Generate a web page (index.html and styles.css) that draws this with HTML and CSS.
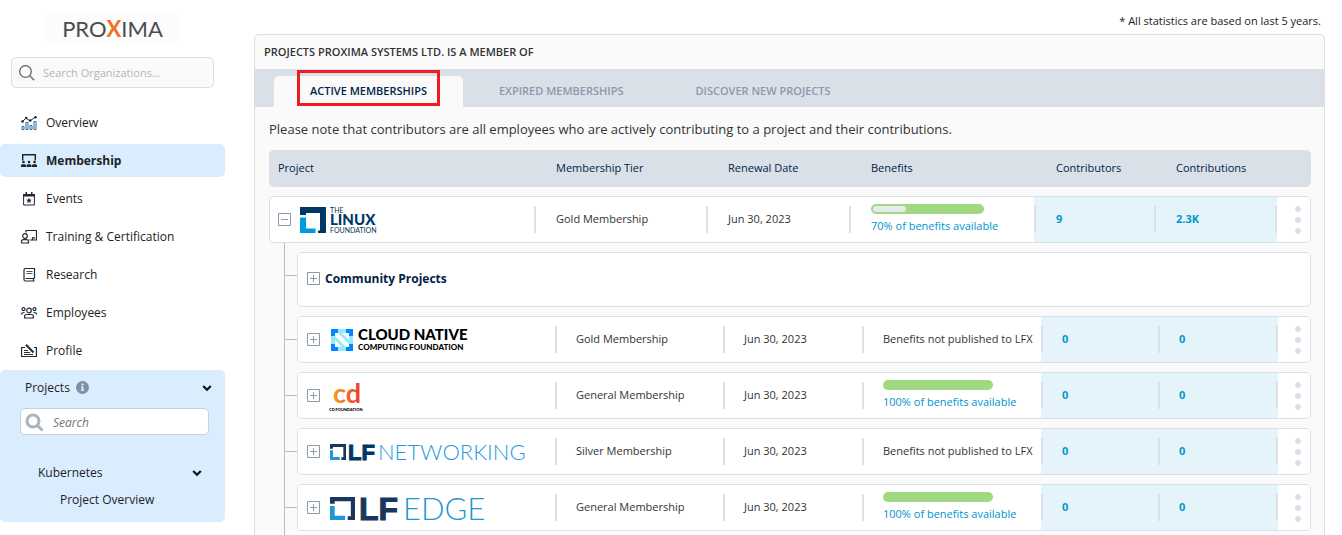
FILE: index.html
```html
<!DOCTYPE html>
<html lang="en">
<head>
<meta charset="utf-8">
<title>Membership</title>
<link rel="stylesheet" href="styles.css">
</head>
<body>
<svg class="defs" aria-hidden="true">
  <symbol id="lf-mark" viewBox="0 0 26 26"><path fill="#003764" d="M0 0H26V26H18V23.500H20V6H6V8H0Z"/><path fill="#009ade" d="M0 10.500H6V21.500H15.500V26H0Z"/></symbol>
  <symbol id="lf-thin" viewBox="0 0 24 24" preserveAspectRatio="none"><path fill="#1b365d" d="M0 0H24V24H17V20H20V4.500H4.500V7H0Z"/><path fill="#1f97d4" d="M0 9.500H4.500V19.500H14.500V24H0Z"/></symbol>
  <symbol id="chevron" viewBox="0 0 10 8"><path d="M1.200 2 5 5.800 8.800 2" fill="none" stroke="#111" stroke-width="2.200"/></symbol>
  <symbol id="plus" viewBox="0 0 13 13"><path d="M.5.5h12v12H.5zM3 6.500h7M6.500 3v7" fill="none" stroke="#8b9bab"/></symbol>
</svg>
<div class="app">
  <aside class="sidebar">
    <div class="brand" aria-label="Proxima">PRO<span>X</span>IMA</div>
    <label class="org-search">
      <svg width="16" height="16" viewBox="0 0 16 16" fill="none" stroke="#666" stroke-width="1.300"><circle cx="6.500" cy="6.500" r="5.800"/><path d="m10.700 10.700 4.500 4.500"/></svg>
      <input type="text" placeholder="Search Organizations..." aria-label="Search organizations">
    </label>
    <nav class="nav">
      <a href="#"><svg width="16" height="14" viewBox="0 0 16 14" fill="none" stroke="#1d2b36"><path d="M1 6 5 2l4 3 6-4.500"/><path stroke="#2b6ea0" d="M1 13.500v-3h2v3zM5 13.500v-7h2v7zM9 13.500v-4h2v4zM13 13.500v-8h2v8z"/><g fill="#1d2b36" stroke="none"><circle cx="1.500" cy="5.500" r="1.300"/><circle cx="5.200" cy="2" r="1.300"/><circle cx="9.200" cy="4.500" r="1.300"/><circle cx="14.500" cy="1.300" r="1.300"/></g></svg>Overview</a>
      <a href="#" class="active" aria-current="page"><svg width="16" height="14" viewBox="0 0 16 14" fill="#1b242c"><path d="M1 0h14v6.500h-1.400V1.500H2.400v5H1z"/><circle cx="2.500" cy="8" r="1.300"/><circle cx="8" cy="8" r="1.300"/><circle cx="13.500" cy="8" r="1.300"/><path d="M0 13v-1.800l1-1h3l1 1V13zM5.500 13v-1.800l1-1h3l1 1V13zM11 13v-1.800l1-1h3l1 1V13z"/></svg>Membership</a>
      <a href="#"><svg width="16" height="14" viewBox="0 0 16 14"><path d="M2.600 2.500h10.800v10.500H2.600z" fill="none" stroke="#222b33"/><path d="M2 2h12v2.500H2zM4.500 0H6v2H4.500zM10 0h1.500v2H10z" fill="#222b33"/><path d="m8 5.800.8 1.700 1.900.2-1.400 1.300.4 1.900L8 10l-1.700.9.4-1.900-1.400-1.300 1.900-.2z" fill="#222b33"/></svg>Events</a>
      <a href="#"><svg width="16" height="14" viewBox="0 0 16 14" fill="none" stroke="#222b33" stroke-width="1.200"><path d="M5 2.500v-2h10.500v9.500H8.500M11.500 10V7.800h2.500"/><circle cx="4" cy="6" r="2.300"/><path d="M.5 13v-1.500c0-1 .8-1.800 1.800-1.800h3.400c1 0 1.800.8 1.800 1.800V13z"/></svg>Training &amp; Certification</a>
      <a href="#"><svg width="16" height="14" viewBox="0 0 16 14" fill="none" stroke="#222b33" stroke-width="1.200"><path d="M13.500 10.500V.5h-9c-1 0-1.500.5-1.500 1.500v9.500c0 1 .5 1.500 1.500 1.500h9M13.500 10.500h-9M12.500 10.500V13"/><path d="M5.500 3.500h6M5.500 5.500h6" stroke="#555"/></svg>Research</a>
      <a href="#"><svg width="16" height="14" viewBox="0 0 16 14" fill="none" stroke="#222b33" stroke-width="1.200"><circle cx="8" cy="4.500" r="2.300"/><circle cx="2.500" cy="3.200" r="1.500"/><circle cx="13.500" cy="3.200" r="1.500"/><path d="M3.600 12v-1.600c0-1.200.9-1.900 2-1.900h4.800c1.100 0 2 .7 2 1.900V12zM.5 8.500C.5 7 1.300 6.500 3.500 6.500M15.500 8.500c0-1.500-.8-2-3-2"/></svg>Employees</a>
      <a href="#"><svg width="16" height="14" viewBox="0 0 16 14" fill="none" stroke="#222b33" stroke-width="1.200"><path d="M4 3.500H.6v9h14.800v-9H13M3 6.500h4M3 8.500h6M3 10.500h9"/><path stroke-width="2" d="m5 .8 7.500 7.700"/></svg>Profile</a>
    </nav>
    <section class="projects">
      <button class="proj-head" type="button"><span>Projects</span><svg width="13" height="13" viewBox="0 0 13 13"><circle cx="6.500" cy="6.500" r="6.500" fill="#808fa3"/><path d="M5.500 2.500h2v2h-2zM5 5.500h2.500v3.500h.5v1H5V9h.5V6.500H5z" fill="#d9edff"/></svg><svg class="end" width="10" height="8"><use href="#chevron"/></svg></button>
      <label class="proj-search">
        <svg width="19" height="19" viewBox="0 0 19 19" fill="none" stroke="#a9b4bf" stroke-width="3"><circle cx="8" cy="8" r="6"/><path d="m12.500 12.500 5 5"/></svg>
        <input type="text" placeholder="Search" aria-label="Search projects">
      </label>
      <button class="kube" type="button"><span>Kubernetes</span><svg class="end" width="10" height="8"><use href="#chevron"/></svg></button>
      <a class="sub" href="#">Project Overview</a>
    </section>
  </aside>

  <main class="main">
    <p class="note">* All statistics are based on last 5 years.</p>
    <section class="panel">
      <h1>PROJECTS PROXIMA SYSTEMS LTD. IS A MEMBER OF</h1>
      <div class="tabs" role="tablist">
        <button role="tab" class="tab current" aria-selected="true" type="button">ACTIVE MEMBERSHIPS</button>
        <button role="tab" class="tab" type="button">EXPIRED MEMBERSHIPS</button>
        <button role="tab" class="tab" type="button">DISCOVER NEW PROJECTS</button>
      </div>
      <div class="content">
        <p class="intro">Please note that contributors are all employees who are actively contributing to a project and their contributions.</p>
        <table class="grid parent">
          <colgroup><col><col class="c-tier"><col class="c-date"><col class="c-ben"><col class="c-num"><col class="c-sum"><col class="c-menu"></colgroup>
          <thead><tr><th>Project</th><th>Membership Tier</th><th>Renewal Date</th><th>Benefits</th><th>Contributors</th><th>Contributions</th><th></th></tr></thead>
          <tbody><tr>
            <td><div class="project"><button class="toggle" type="button" aria-label="Collapse"><svg width="13" height="13" viewBox="0 0 13 13"><path d="M.5.5h12v12H.5zM3 6.500h7" fill="none" stroke="#8b9bab"/></svg></button>
              <svg class="logo" width="82" height="28" viewBox="0 0 82 28"><use href="#lf-mark" width="26" height="26" y="1"/><g fill="#003764"><text class="lg-sans" x="30" y="7" font-size="7">THE</text><text class="lg-heavy" x="30" y="19" font-size="15">LINUX</text><text class="lg-sans" x="30" y="27" font-size="7">FOUNDATION</text></g></svg></div></td>
            <td>Gold Membership</td><td>Jun 30, 2023</td>
            <td><div class="meter"><span style="width:30%"></span></div><a href="#">70% of benefits available</a></td>
            <td class="num">9</td><td class="num last">2.3K</td>
            <td class="menu"><button type="button" aria-label="More"><i></i><i></i><i></i></button></td>
          </tr></tbody>
        </table>
        <div class="tree">
          <table class="grid child">
            <colgroup><col><col class="c-tier"><col class="c-date"><col class="c-ben"><col class="c-num"><col class="c-sum"><col class="c-menu"></colgroup>
            <tbody>
            <tr class="community"><td colspan="7"><div class="project"><button class="toggle" type="button" aria-label="Expand"><svg width="13" height="13"><use href="#plus"/></svg></button><strong>Community Projects</strong></div></td></tr>
            <tr>
              <td><div class="project"><button class="toggle" type="button" aria-label="Expand"><svg width="13" height="13"><use href="#plus"/></svg></button>
                <svg class="logo" width="142" height="28" viewBox="0 0 142 28"><g transform="translate(2 3)"><path fill="#93eaff" d="M0 0h22v22H0z"/><path fill="#0086ff" d="M0 0h7v4H4v3H0zM15 0h7v7h-4V4h-3zM22 15v7h-7v-4h3v-3zM7 22H0v-7h4v3h3z"/><path fill="#fff" d="M4 4h14v14H4z"/><path fill="#93eaff" d="M4 7 15 18h-4L4 11zM7 4l11 11v-4l-7-7z"/></g><text class="lg-heavy" x="29" y="14" font-size="15">CLOUD NATIVE</text><text class="lg-heavy" x="29" y="24" font-size="8">COMPUTING FOUNDATION</text></svg></div></td>
              <td>Gold Membership</td><td>Jun 30, 2023</td><td>Benefits not published to LFX</td>
              <td class="num">0</td><td class="num last">0</td>
              <td class="menu"><button type="button" aria-label="More"><i></i><i></i><i></i></button></td>
            </tr>
            <tr>
              <td><div class="project"><button class="toggle" type="button" aria-label="Expand"><svg width="13" height="13"><use href="#plus"/></svg></button>
                <svg class="logo" width="40" height="32" viewBox="0 0 40 32"><defs><linearGradient id="cd" gradientUnits="userSpaceOnUse" x1="4" y1="0" x2="32" y2="0"><stop stop-color="#f79a1f"/><stop offset="1" stop-color="#ec3a2d"/></linearGradient></defs><text class="lg-bold" x="4" y="23" font-size="27" fill="url(#cd)">cd</text><text class="lg-heavy" x="0" y="31" font-size="4">CD.FOUNDATION</text></svg></div></td>
              <td>General Membership</td><td>Jun 30, 2023</td>
              <td><div class="meter"></div><a href="#">100% of benefits available</a></td>
              <td class="num">0</td><td class="num last">0</td>
              <td class="menu"><button type="button" aria-label="More"><i></i><i></i><i></i></button></td>
            </tr>
            <tr>
              <td><div class="project"><button class="toggle" type="button" aria-label="Expand"><svg width="13" height="13"><use href="#plus"/></svg></button>
                <svg class="logo" width="200" height="24" viewBox="0 0 200 24"><use href="#lf-thin" width="16" height="16" x="1" y="4"/><text class="lg-wide" x="19" y="20" font-size="22" fill="#003764" stroke="#003764">LF</text><text class="lg-light" x="49" y="20" font-size="22" fill="#1f9bdb">NETWORKING</text></svg></div></td>
              <td>Silver Membership</td><td>Jun 30, 2023</td><td>Benefits not published to LFX</td>
              <td class="num">0</td><td class="num last">0</td>
              <td class="menu"><button type="button" aria-label="More"><i></i><i></i><i></i></button></td>
            </tr>
            <tr>
              <td><div class="project"><button class="toggle" type="button" aria-label="Expand"><svg width="13" height="13"><use href="#plus"/></svg></button>
                <svg class="logo" width="160" height="30" viewBox="0 0 160 30"><use href="#lf-thin" width="25" height="23" x="1" y="4"/><text class="lg-wide" x="30" y="27" font-size="32" fill="#1b365d" stroke="#1b365d">LF</text><text class="lg-light" x="74" y="27" font-size="31" fill="#1f97d4">EDGE</text></svg></div></td>
              <td>General Membership</td><td>Jun 30, 2023</td>
              <td><div class="meter"></div><a href="#">100% of benefits available</a></td>
              <td class="num">0</td><td class="num last">0</td>
              <td class="menu"><button type="button" aria-label="More"><i></i><i></i><i></i></button></td>
            </tr>
            </tbody>
          </table>
        </div>
      </div>
    </section>
  </main>
</div>
</body>
</html>
```
FILE: styles.css
```css
* { box-sizing: border-box; }
body { margin: 0; background: #fff; color: #333; font: 12px/16px "Open Sans", sans-serif; }
button, input { font: inherit; color: inherit; }
button { border: 0; padding: 0; background: none; cursor: pointer; }
a { color: inherit; text-decoration: none; }
p, h1 { margin: 0; }
svg { flex: none; display: block; }
.defs { position: absolute; width: 0; height: 0; }
.app { display: flex; height: 100vh; }

/* Sidebar */
.sidebar { width: 225px; flex: none; display: flex; flex-direction: column; padding-top: 14px; overflow: hidden; color: #222; }
.brand { width: 135px; height: 29px; margin-left: 45px; background: #fcfcfc; color: #4c4c4e; font: 22px/29px Lato, sans-serif; text-align: center; }
.brand span { color: #f37021; font-weight: 700; }
.org-search { display: flex; align-items: center; gap: 8px; height: 31px; margin: 14px 11px 18px; padding: 0 7px; border: 1px solid #dedede; border-radius: 5px; background: #fafafa; font-size: 11px; }
.org-search input, .proj-search input { flex: 1; min-width: 0; border: 0; padding: 0; background: none; outline: 0; }
.org-search input::placeholder { color: #b5b5b5; }
.nav { display: flex; flex-direction: column; gap: 5px; }
.nav a { display: flex; align-items: center; gap: 9px; height: 33px; padding-left: 21px; border-radius: 5px; }
.nav .active { background: #d9edff; font-weight: 700; }
.projects { display: flex; flex-direction: column; margin-top: 3px; padding: 9px 11px 14px 20px; border-radius: 5px; background: #d9edff; }
.projects .end { margin-left: auto; }
.proj-head { display: flex; align-items: center; gap: 6px; height: 17px; padding: 0 2px 0 5px; }
.proj-search { display: flex; align-items: center; gap: 9px; height: 27px; margin: 12px 5px 29px 0; padding: 2px 4px 0; border: 1px solid #ccd0d6; border-radius: 5px; background: #fff; font-style: italic; }
.proj-search input { height: 22px; }
.kube { display: flex; align-items: center; height: 17px; padding: 0 12px 0 18px; }
.sub { margin: 11px 0 0 40px; }

/* Main */
.main { flex: 1; min-width: 0; display: flex; flex-direction: column; padding: 13px 17px 0 29px; overflow: auto; scrollbar-width: none; font-size: 11px; }
.note { padding-right: 4px; margin-bottom: 5px; text-align: right; color: #222; }
.panel { flex: 1 0 auto; display: flex; flex-direction: column; border: 1px solid #dedede; border-bottom: 0; border-radius: 5px 5px 0 0; background: #fafafa; }
h1 { height: 34px; padding-left: 9px; font-size: 11px; line-height: 34px; font-weight: 600; }
.tabs { display: flex; align-items: flex-end; height: 38px; padding-left: 19px; background: #d9e0e8; }
.tab { position: relative; height: 31px; padding: 0 36px 2px; border-radius: 5px 5px 0 0; font-weight: 600; color: #8b99ac; }
.current { background: #fafafa; color: #002447; }
.current::after { content: ""; position: absolute; inset: -6px 23px 1px; border: 3px solid #ee1c25; }
.content { flex: 1; display: flex; flex-direction: column; padding: 13px 13px 0 14px; }
.intro { font-size: 13px; line-height: 18px; margin-bottom: 3px; }

/* Membership rows */
.grid { width: 100%; table-layout: fixed; border-collapse: separate; border-spacing: 0 9px; }
.grid th, .grid td { padding: 0 0 2px 21px; text-align: left; white-space: nowrap; }
.parent th, .parent td { padding-left: 22px; }
.grid th { height: 37px; background: #d9e0e8; color: #002447; font-weight: 400; }
.grid td { height: 47px; border: solid #d9e0e8; border-width: 1px 0; background: #fff linear-gradient(#d9e0e8, #d9e0e8) no-repeat 0 50% / 2px 27px; }
.grid th:first-child { padding-left: 9px; border-radius: 5px 0 0 5px; }
.grid th:last-child { border-radius: 0 5px 5px 0; }
.grid td:first-child { padding: 0 0 0 9px; border-left-width: 1px; border-radius: 5px 0 0 5px; background: #fff; }
.parent td:first-child { padding-left: 8px; }
.grid td:last-child { border-right-width: 1px; border-radius: 0 5px 5px 0; background: #fff; }
.parent .c-tier { width: 172px; }
.parent .c-date { width: 143px; }
.parent .c-ben { width: 185px; }
.parent .c-num { width: 120px; }
.parent .c-sum { width: 123px; }
.parent .c-menu { width: 34px; }
.child .c-tier { width: 168px; }
.child .c-date { width: 139px; }
.child .c-ben { width: 179px; }
.child .c-num { width: 117px; }
.child .c-sum { width: 120px; }
.child .c-menu { width: 33px; }
.grid .num { background-color: #e5f4fa; color: #0099cc; font-weight: 700; }
.grid .last { background-image: linear-gradient(#d9e0e8, #d9e0e8), linear-gradient(#d9e0e8, #d9e0e8); background-position: 0 50%, 100% 50%; }
.grid td a { color: #0094d0; display: block; }
.meter { width: 113px; height: 10px; margin-bottom: 4px; padding: 2px; border-radius: 5px; background: #a1d884; }
.child .meter { width: 110px; }
.meter span { display: block; height: 6px; border-radius: 3px; background: #e6eaee; }
.project { display: flex; align-items: center; gap: 9px; }
.project strong { font-size: 12px; color: #002447; margin-left: -4px; }
.logo { overflow: visible; }
.grid .menu { padding: 0 0 0 17px; }
.parent .menu { padding-left: 18px; }
.menu button { display: flex; flex-direction: column; gap: 5px; }
.menu i { width: 6px; height: 6px; border-radius: 50%; background: #d9e0e8; }
.tree { flex: 1; margin: -9px 0 0 15px; padding-left: 12px; border-left: 1px solid #bbb; }
.child td:first-child { position: relative; }
.child td:first-child::before { content: ""; position: absolute; left: -13px; top: 22px; width: 12px; height: 1px; background: #bbb; }
.grid .community td:first-child { height: 55px; padding-bottom: 2px; border-width: 1px; border-radius: 5px; }

/* Logo lettering */
.lg-sans { font-family: Lato, sans-serif; }
.lg-light { font-family: Lato, sans-serif; font-weight: 300; }
.lg-bold { font-family: Lato, sans-serif; font-weight: 700; }
.lg-heavy { font-family: Lato, sans-serif; font-weight: 900; }
.lg-wide { font-family: "Liberation Sans", sans-serif; font-weight: 700; }
```
